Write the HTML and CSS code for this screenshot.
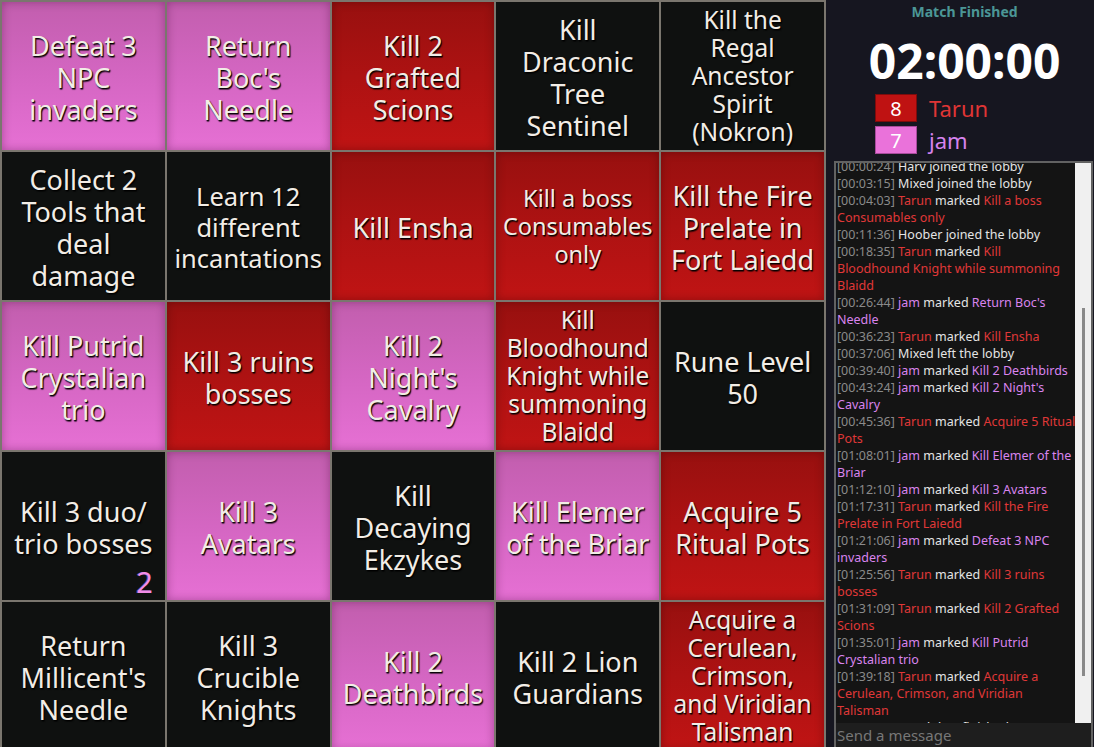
FILE: index.html
```html
<!DOCTYPE html>
<html lang="en">
<head>
<meta charset="utf-8">
<title>Bingo</title>
<link rel="stylesheet" href="styles.css">
</head>
<body>
<div class="app">
  <main class="board">
    <div class="cell pink">Defeat 3<br>NPC<br>invaders</div>
    <div class="cell pink">Return<br>Boc's<br>Needle</div>
    <div class="cell red">Kill 2<br>Grafted<br>Scions</div>
    <div class="cell black">Kill<br>Draconic<br>Tree<br>Sentinel</div>
    <div class="cell black fs-sm">Kill the<br>Regal<br>Ancestor<br>Spirit<br>(Nokron)</div>

    <div class="cell black">Collect 2<br>Tools that<br>deal<br>damage</div>
    <div class="cell black fs-md">Learn 12<br>different<br>incantations</div>
    <div class="cell red">Kill Ensha</div>
    <div class="cell red fs-xs">Kill a boss<br>Consumables<br>only</div>
    <div class="cell red">Kill the Fire<br>Prelate in<br>Fort Laiedd</div>

    <div class="cell pink">Kill Putrid<br>Crystalian<br>trio</div>
    <div class="cell red">Kill 3 ruins<br>bosses</div>
    <div class="cell pink">Kill 2<br>Night's<br>Cavalry</div>
    <div class="cell red fs-sm">Kill<br>Bloodhound<br>Knight while<br>summoning<br>Blaidd</div>
    <div class="cell black">Rune Level<br>50</div>

    <div class="cell black">Kill 3 duo/<br>trio bosses<span class="counter">2</span></div>
    <div class="cell pink">Kill 3<br>Avatars</div>
    <div class="cell black">Kill<br>Decaying<br>Ekzykes</div>
    <div class="cell pink">Kill Elemer<br>of the Briar</div>
    <div class="cell red">Acquire 5<br>Ritual Pots</div>

    <div class="cell black">Return<br>Millicent's<br>Needle</div>
    <div class="cell black">Kill 3<br>Crucible<br>Knights</div>
    <div class="cell pink">Kill 2<br>Deathbirds</div>
    <div class="cell black">Kill 2 Lion<br>Guardians</div>
    <div class="cell red fs-sm">Acquire a<br>Cerulean,<br>Crimson,<br>and Viridian<br>Talisman</div>
  </main>

  <aside class="sidebar">
    <div class="status">Match Finished</div>
    <div class="timer">02:00:00</div>
    <div class="teams">
      <div class="team">
        <span class="score score-red">8</span>
        <span class="team-name t-red">Tarun</span>
      </div>
      <div class="team">
        <span class="score score-pink">7</span>
        <span class="team-name t-pink">jam</span>
      </div>
    </div>

    <section class="chat">
      <div class="chat-body">
        <div class="log">
          <div class="msg"><span class="ts">[00:00:24]</span> <span class="w">Harv joined the lobby</span></div>
          <div class="msg"><span class="ts">[00:03:15]</span> <span class="w">Mixed joined the lobby</span></div>
          <div class="msg"><span class="ts">[00:04:03]</span> <span class="r">Tarun</span> <span class="w">marked</span> <span class="r">Kill a boss<br>Consumables only</span></div>
          <div class="msg"><span class="ts">[00:11:36]</span> <span class="w">Hoober joined the lobby</span></div>
          <div class="msg"><span class="ts">[00:18:35]</span> <span class="r">Tarun</span> <span class="w">marked</span> <span class="r">Kill<br>Bloodhound Knight while summoning<br>Blaidd</span></div>
          <div class="msg"><span class="ts">[00:26:44]</span> <span class="p">jam</span> <span class="w">marked</span> <span class="p">Return Boc's<br>Needle</span></div>
          <div class="msg"><span class="ts">[00:36:23]</span> <span class="r">Tarun</span> <span class="w">marked</span> <span class="r">Kill Ensha</span></div>
          <div class="msg"><span class="ts">[00:37:06]</span> <span class="w">Mixed left the lobby</span></div>
          <div class="msg"><span class="ts">[00:39:40]</span> <span class="p">jam</span> <span class="w">marked</span> <span class="p">Kill 2 Deathbirds</span></div>
          <div class="msg"><span class="ts">[00:43:24]</span> <span class="p">jam</span> <span class="w">marked</span> <span class="p">Kill 2 Night's<br>Cavalry</span></div>
          <div class="msg"><span class="ts">[00:45:36]</span> <span class="r">Tarun</span> <span class="w">marked</span> <span class="r">Acquire 5 Ritual<br>Pots</span></div>
          <div class="msg"><span class="ts">[01:08:01]</span> <span class="p">jam</span> <span class="w">marked</span> <span class="p">Kill Elemer of the<br>Briar</span></div>
          <div class="msg"><span class="ts">[01:12:10]</span> <span class="p">jam</span> <span class="w">marked</span> <span class="p">Kill 3 Avatars</span></div>
          <div class="msg"><span class="ts">[01:17:31]</span> <span class="r">Tarun</span> <span class="w">marked</span> <span class="r">Kill the Fire<br>Prelate in Fort Laiedd</span></div>
          <div class="msg"><span class="ts">[01:21:06]</span> <span class="p">jam</span> <span class="w">marked</span> <span class="p">Defeat 3 NPC<br>invaders</span></div>
          <div class="msg"><span class="ts">[01:25:56]</span> <span class="r">Tarun</span> <span class="w">marked</span> <span class="r">Kill 3 ruins<br>bosses</span></div>
          <div class="msg"><span class="ts">[01:31:09]</span> <span class="r">Tarun</span> <span class="w">marked</span> <span class="r">Kill 2 Grafted<br>Scions</span></div>
          <div class="msg"><span class="ts">[01:35:01]</span> <span class="p">jam</span> <span class="w">marked</span> <span class="p">Kill Putrid<br>Crystalian trio</span></div>
          <div class="msg"><span class="ts">[01:39:18]</span> <span class="r">Tarun</span> <span class="w">marked</span> <span class="r">Acquire a<br>Cerulean, Crimson, and Viridian<br>Talisman</span></div>
          <div class="msg"><span class="ts">[02:00:00]</span> <span class="w">Match has finished</span></div>
        </div>
        <div class="scrollbar"><div class="thumb"></div></div>
      </div>
      <input class="chat-input" type="text" placeholder="Send a message">
    </section>
  </aside>
</div>
</body>
</html>
```

FILE: styles.css
```css
* { box-sizing: border-box; }

html, body {
  margin: 0;
  height: 747px;
  overflow: hidden;
}

body {
  background: #161620;
  font-family: "Noto Sans", "Open Sans", sans-serif;
}

.app {
  display: flex;
  height: 747px;
}

/* ---------- board ---------- */
.board {
  flex: 0 0 826px;
  height: 752px;
  display: grid;
  grid-template-columns: repeat(5, 1fr);
  grid-template-rows: repeat(5, 148px);
  gap: 2px;
  padding: 2px;
  background: #7a766e;
}

.cell {
  position: relative;
  display: flex;
  align-items: center;
  justify-content: center;
  text-align: center;
  white-space: nowrap;
  color: #f2ede6;
  font-size: 27px;
  line-height: 32px;
  text-shadow: 1px 1px 1px #000, 1px 2px 1px rgba(0,0,0,0.5);
  padding: 4px 2px 0;
}

.cell.fs-md { font-size: 25.5px; line-height: 31px; padding-top: 2px; }
.cell.fs-sm { font-size: 24.5px; line-height: 28px; padding-top: 0; }
.cell.fs-xs { font-size: 23.5px; line-height: 28px; padding-top: 0; }

.black { background: #0f1110; }

.pink {
  background: linear-gradient(180deg, #c25eae 0%, #d466c2 50%, #e670d4 100%);
  box-shadow: inset 0 0 10px rgba(60, 0, 50, 0.35);
}

.red {
  background: linear-gradient(180deg, #98100f 0%, #ad1212 50%, #c01414 100%);
  box-shadow: inset 0 0 10px rgba(40, 0, 0, 0.35);
}

.counter {
  position: absolute;
  right: 12px;
  bottom: 4px;
  font-size: 29px;
  line-height: 1;
  color: #f28de8;
  text-shadow: -1px 0 0 rgba(140, 130, 255, 0.6);
}

/* ---------- sidebar ---------- */
.sidebar {
  flex: 1 1 auto;
  height: 747px;
  display: flex;
  flex-direction: column;
  padding: 0 1px 0 8px;
  background: #161620;
}

.status {
  text-align: center;
  color: #4b9696;
  font-weight: 700;
  font-size: 14px;
  line-height: 20px;
  margin-top: 2px;
  padding-left: 2px;
}

.timer {
  text-align: center;
  color: #ffffff;
  font-weight: 700;
  font-size: 48px;
  line-height: 56px;
  margin-top: 11px;
  padding-left: 2px;
}

.teams {
  display: flex;
  flex-direction: column;
  gap: 4px;
  padding-left: 41px;
  margin-top: 5px;
}

.team {
  display: flex;
  align-items: center;
  gap: 12px;
  height: 28px;
}

.score {
  width: 42px;
  height: 28px;
  display: flex;
  align-items: center;
  justify-content: center;
  color: #fff;
  font-size: 20px;
}

.score-red { background: #bf1212; border: 1px solid #7d0c0c; }
.score-pink { background: #ea72da; border: 1px solid #a84b9c; }

.team-name { font-size: 22px; line-height: 28px; }
.t-red { color: #e03535; }
.t-pink { color: #d683ee; }

/* ---------- chat ---------- */
.chat {
  margin-top: 7px;
  flex: 1 1 auto;
  display: flex;
  flex-direction: column;
  border-top: 2px solid #626262;
  border-left: 2px solid #626262;
  border-right: 2px solid #626262;
  min-height: 0;
}

.chat-body {
  flex: 1 1 auto;
  min-height: 0;
  display: flex;
  background: #141414;
}

.log {
  flex: 1 1 auto;
  overflow: hidden;
  padding-left: 1px;
  font-size: 12.5px;
  line-height: 17px;
  white-space: nowrap;
}

.msg:first-child { margin-top: -5px; }

.ts { color: #8a8a8a; }
.w { color: #e4e4e4; }
.r { color: #e03838; }
.p { color: #d984ee; }

.scrollbar {
  flex: 0 0 16px;
  background: #f0f0f0;
  display: flex;
  justify-content: center;
}

.thumb {
  width: 3px;
  height: 368px;
  margin-top: 145px;
  background: #8a8a8a;
}

.chat-input {
  flex: 0 0 24px;
  width: 100%;
  border: none;
  outline: none;
  background: #1e1e1e;
  color: #ddd;
  font-family: "Noto Sans", "Open Sans", sans-serif;
  font-size: 15px;
  padding: 0 1px;
  margin: 0;
}

.chat-input::placeholder { color: #777; }
```
